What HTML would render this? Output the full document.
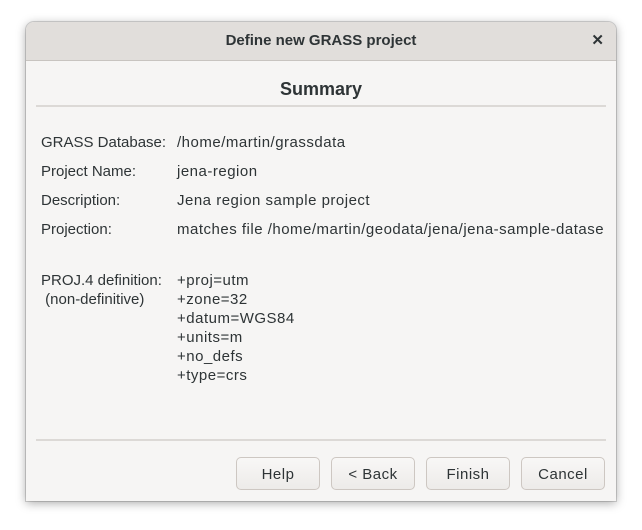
<!DOCTYPE html>
<html><head><style>
body{margin:0;width:642px;height:530px;background:#fff;position:relative;overflow:hidden;font-family:"Liberation Sans",sans-serif;color:#2e3436}
.win{position:absolute;left:26px;top:22px;width:590px;height:479px;background:#f6f5f4;border-radius:8px 8px 0 0;box-shadow:0 2px 10px rgba(0,0,0,.35);outline:1px solid rgba(0,0,0,.15);overflow:hidden}
.tb{position:absolute;left:0;top:0;width:590px;height:38px;background:#e1dedb;border-bottom:1px solid #c8c4c0;text-align:center;line-height:38px;font-weight:bold;font-size:15px}
.x{position:absolute;right:12px;top:0;font-size:15px;font-weight:bold}
.t{position:absolute;font-size:15px;white-space:nowrap;line-height:19px;letter-spacing:0.5px}
.l{letter-spacing:0}
.sep{position:absolute;left:10px;width:570px;height:2px;background:#dcd9d6}
.b{position:absolute;top:435px;width:84px;height:33px;border:1px solid #cdc7c2;border-radius:5px;background:linear-gradient(#f8f7f6,#edebe9);box-sizing:border-box;text-align:center;line-height:33px;font-size:15px;letter-spacing:0.5px}
</style></head><body>
<div class="win">
<div class="tb">Define new GRASS project<span class="x">✕</span></div>
<div class="t" style="left:0;width:590px;text-align:center;top:56px;font-size:18px;font-weight:bold;line-height:22px;letter-spacing:0">Summary</div>
<div class="sep" style="top:83px"></div>
<div class="t l" style="left:15px;top:111px">GRASS Database:</div><div class="t" style="left:151px;top:111px">/home/martin/grassdata</div>
<div class="t l" style="left:15px;top:140px">Project Name:</div><div class="t" style="left:151px;top:140px">jena-region</div>
<div class="t l" style="left:15px;top:169px">Description:</div><div class="t" style="left:151px;top:169px">Jena region sample project</div>
<div class="t l" style="left:15px;top:198px">Projection:</div><div class="t" style="left:151px;top:198px">matches file /home/martin/geodata/jena/jena-sample-datase</div>
<div class="t l" style="left:15px;top:249px">PROJ.4 definition:<br>&nbsp;(non-definitive)</div>
<div class="t" style="left:151px;top:249px">+proj=utm<br>+zone=32<br>+datum=WGS84<br>+units=m<br>+no_defs<br>+type=crs</div>
<div class="sep" style="top:417px"></div>
<div class="b" style="left:210px">Help</div>
<div class="b" style="left:305px">&lt; Back</div>
<div class="b" style="left:400px">Finish</div>
<div class="b" style="left:495px">Cancel</div>
</div>
</body></html>
